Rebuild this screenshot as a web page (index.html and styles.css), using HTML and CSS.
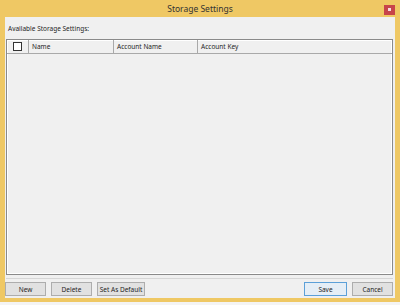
FILE: index.html
```html
<!DOCTYPE html>
<html lang="en">
<head>
    <meta charset="UTF-8">
    <title>Storage Settings</title>
    <link rel="stylesheet" href="styles.css">
</head>
<body>
    <div class="window">
        <div class="titlebar">
            <span></span>
            <div class="title">Storage Settings</div>
            <div class="close"><span class="close-mark"></span></div>
        </div>
        <div class="content">
            <div class="label">Available Storage Settings:</div>
            <div class="grid">
                <div class="grid-header">
                    <div class="cell cell-check"><span class="checkbox"></span></div>
                    <div class="cell cell-name">Name</div>
                    <div class="cell cell-account">Account Name</div>
                    <div class="cell cell-key">Account Key</div>
                </div>
                <div class="grid-body"></div>
            </div>
            <div class="separator"></div>
            <div class="buttons">
                <div class="btn">New</div>
                <div class="btn">Delete</div>
                <div class="btn btn-wide">Set As Default</div>
                <div class="spacer"></div>
                <div class="btn btn-default">Save</div>
                <div class="btn">Cancel</div>
            </div>
        </div>
    </div>
</body>
</html>
```

FILE: styles.css
```css
body {
    margin: 0;
    background-color: #f4f4f4;
    font-family: 'Noto Sans', 'Liberation Sans', sans-serif;
    color: #1e1e1e;
}
.window {
    height: 302px;
    box-sizing: border-box;
    background-color: #efc864;
    padding: 0 5px 4px 5px;
    display: flex;
    flex-direction: column;
}
.titlebar {
    height: 17px;
    display: grid;
    grid-template-columns: 1fr auto 1fr;
    align-items: center;
}
.title {
    font-size: 8.5px;
    color: #333;
}
.close {
    justify-self: end;
    width: 11px;
    height: 10px;
    margin-right: 0;
    margin-top: 2px;
    background-color: #c7444a;
    display: flex;
    align-items: center;
    justify-content: center;
}
.close-mark {
    width: 3px;
    height: 3px;
    background-color: #f4dcdc;
}
.content {
    flex: 1;
    background-color: #f0f0f0;
    padding: 5px 2px 2px 1px;
    display: flex;
    flex-direction: column;
}
.label {
    font-size: 6.5px;
    height: 17px;
    line-height: 14px;
    padding-left: 2px;
}
.grid {
    flex: 1;
    border: 1px solid #8a8a8a;
    box-shadow: inset 0 0 0 1px #ffffff;
    display: flex;
    flex-direction: column;
}
.grid-header {
    display: flex;
    height: 13px;
    border-bottom: 1px solid #a9a9a9;
    font-size: 6.5px;
}
.cell {
    display: flex;
    align-items: center;
    border-right: 1px solid #a9a9a9;
    padding-left: 3px;
    box-sizing: border-box;
}
.cell-check {
    width: 22px;
    justify-content: center;
    padding-left: 0;
}
.cell-name {
    width: 85px;
}
.cell-account {
    width: 84px;
}
.cell-key {
    flex: 1;
    border-right: none;
}
.checkbox {
    width: 7px;
    height: 7px;
    border: 1px solid #333;
    background-color: #fff;
}
.grid-body {
    flex: 1;
}
.separator {
    height: 1px;
    margin-top: 3px;
    background-color: #d6d6d6;
}
.buttons {
    display: flex;
    gap: 5px;
    margin-top: 3px;
    margin-left: -1px;
}
.btn {
    width: 41px;
    height: 14px;
    box-sizing: border-box;
    border: 1px solid #adadad;
    background-color: #e1e1e1;
    font-size: 6.5px;
    display: flex;
    align-items: center;
    justify-content: center;
}
.btn-wide {
    width: 48px;
}
.btn-default {
    width: 43px;
    border-color: #5ca0d8;
    background-color: #e5eef6;
}
.spacer {
    flex: 1;
}
```
